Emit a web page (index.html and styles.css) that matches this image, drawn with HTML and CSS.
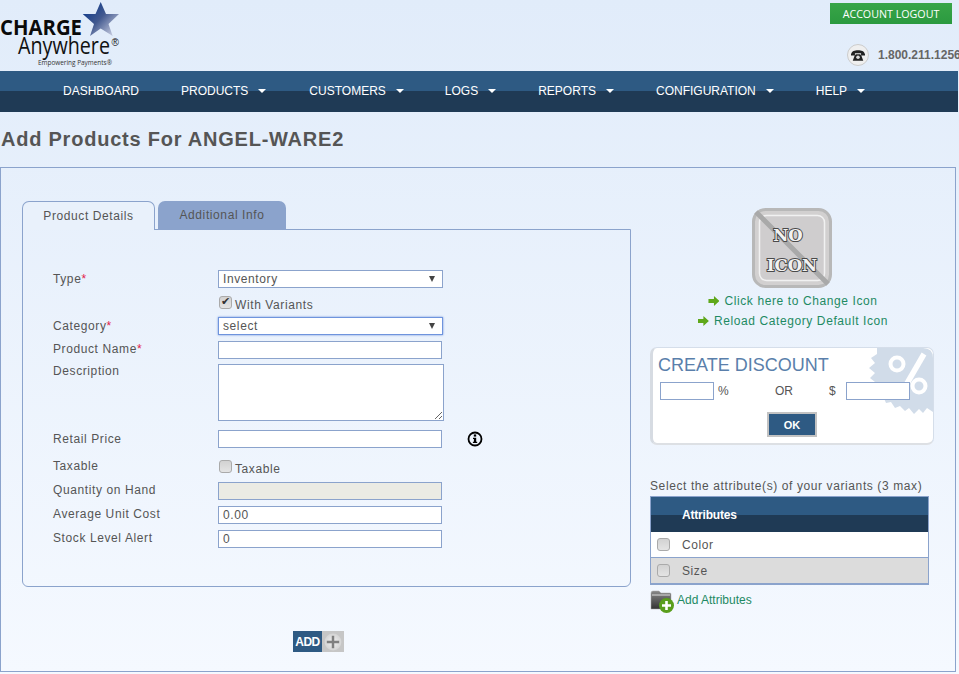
FILE: index.html
```html
<!DOCTYPE html>
<html lang="en">
<head>
<meta charset="utf-8">
<title>Add Products</title>
<link rel="stylesheet" href="styles.css">
</head>
<body>
<header class="top">
  <svg class="logo" width="125" height="71" viewBox="0 0 125 71" aria-label="Charge Anywhere">
    <defs>
      <linearGradient id="star" x1="0.2" y1="0" x2="1" y2="0.7">
        <stop offset="0" stop-color="#0f3a8a"/>
        <stop offset="0.5" stop-color="#42598f"/>
        <stop offset="1" stop-color="#b9c0d8"/>
      </linearGradient>
    </defs>
    <path d="M100.700 2 L106 14 L119 14 L108.500 24 L112.700 36 L100.700 28.500 L90 36 L94 24 L82.700 14 L95.500 14 Z" fill="url(#star)"/>
    <text x="0" y="35" class="logo-charge" textLength="82" lengthAdjust="spacingAndGlyphs">CHARGE</text>
    <text x="18" y="54" class="logo-any" textLength="92" lengthAdjust="spacingAndGlyphs">Anywhere</text>
    <text x="111.500" y="46" class="logo-reg">®</text>
    <text x="38" y="64.500" class="logo-tag" textLength="74" lengthAdjust="spacingAndGlyphs">Empowering Payments®</text>
  </svg>
  <div class="top-right">
    <a class="logout">ACCOUNT LOGOUT</a>
    <div class="phone">
      <span class="phone-icon">
        <svg width="14" height="11" viewBox="0 0 16 12"><path d="M0 4.500 C1 1 4 0 8 0 C12 0 15 1 16 4.500 L16 6 L11.500 6 L11.500 3.500 L4.500 3.500 L4.500 6 L0 6 Z M4 6.500 L5.500 4.500 L10.500 4.500 L12 6.500 L14 12 L2 12 Z" fill="#222"/><circle cx="8" cy="8" r="2" fill="#ddd"/></svg>
      </span>
      <span>1.800.211.1256</span>
    </div>
  </div>
</header>
<nav class="nav">
  <a class="nav-item">DASHBOARD</a>
  <a class="nav-item has-caret wide">PRODUCTS</a>
  <a class="nav-item has-caret narrow">CUSTOMERS</a>
  <a class="nav-item has-caret">LOGS</a>
  <a class="nav-item has-caret">REPORTS</a>
  <a class="nav-item has-caret">CONFIGURATION</a>
  <a class="nav-item has-caret">HELP</a>
</nav>
<h1 class="title">Add Products For ANGEL-WARE2</h1>
<main class="panel">
  <section class="left">
    <div class="tabs">
      <div class="tab active">Product Details</div>
      <div class="tab second">Additional Info</div>
    </div>
    <form class="tab-body">
      <label class="lbl r-type">Type<em>*</em></label>
      <div class="sel-wrap r-type"><select class="field"><option>Inventory</option></select></div>

      <span class="r-variants"></span>
      <label class="check r-variants"><input type="checkbox" checked><span>With Variants</span></label>

      <label class="lbl r-cat">Category<em>*</em></label>
      <div class="sel-wrap focus r-cat"><select class="field"><option>select</option></select></div>

      <label class="lbl r-name">Product Name<em>*</em></label>
      <input class="field short r-name" type="text">

      <label class="lbl r-desc">Description</label>
      <textarea class="field area r-desc"></textarea>

      <label class="lbl r-price">Retail Price</label>
      <div class="price-row r-price">
        <input class="field short" type="text">
        <svg class="info" width="16" height="16" viewBox="0 0 16 16"><circle cx="8" cy="8" r="6.500" fill="none" stroke="#000" stroke-width="1.800"/><rect x="6.800" y="3.400" width="2.400" height="2.200" fill="#000"/><path d="M6 6.800 H9.200 V10.800 H10.200 V12 H5.900 V10.800 H6.900 V8 H6 Z" fill="#000"/></svg>
      </div>

      <label class="lbl r-tax">Taxable</label>
      <label class="check r-tax"><input type="checkbox"><span>Taxable</span></label>

      <label class="lbl r-qty">Quantity on Hand</label>
      <input class="field short disabled r-qty" type="text" disabled>

      <label class="lbl r-avg">Average Unit Cost</label>
      <input class="field short r-avg" type="text" value="0.00">

      <label class="lbl r-stock">Stock Level Alert</label>
      <input class="field short r-stock" type="text" value="0">
    </form>
    <div class="add-wrap">
      <button class="add" type="button">ADD</button>
      <span class="add-plus">
        <svg width="18" height="18" viewBox="0 0 16 16"><defs><radialGradient id="knob"><stop offset="0" stop-color="#f2f2f2"/><stop offset="1" stop-color="#d4d4d4"/></radialGradient></defs><circle cx="8" cy="8" r="7.500" fill="url(#knob)"/><path d="M8 2.500 V13.500 M2.500 8 H13.500" stroke="#808080" stroke-width="2.200"/></svg>
      </span>
    </div>
  </section>
  <aside class="right">
    <svg class="noicon" width="80" height="80" viewBox="0 0 80 80">
      <rect x="1.500" y="1.500" width="77" height="77" rx="12" fill="#d2d0d0" stroke="#b8b8b8" stroke-width="3"/>
      <rect x="7.500" y="7.500" width="65" height="65" rx="7" fill="#cfcdce" stroke="#f1f1f1" stroke-width="1.500"/>
      <path d="M4 4 L76 76" stroke="#a9a9a9" stroke-width="5"/>
      <text x="36" y="33" class="noicon-text">NO</text>
      <text x="40" y="63" class="noicon-text">ICON</text>
    </svg>
    <a class="icon-link first"><i class="arrow"></i>Click here to Change Icon</a>
    <a class="icon-link"><i class="arrow"></i>Reload Category Default Icon</a>

    <div class="discount">
      <svg class="badge" width="64" height="66" viewBox="0 0 64 66">
        <path d="M8 0 H54 Q64 0 64 10 V64 L58 60 L54 65 L50 61 L45 66 L40 60 L36 63 L31 58 L26 60 L22 54 L17 55 L14 48 L9 49 L8 42 L3 40 L6 34 L1 30 L6 25 L0 20 L6 15 L2 10 L8 6 Z" fill="#d1dce9"/>
        <circle cx="28" cy="16" r="6.500" fill="none" stroke="#fff" stroke-width="4"/>
        <circle cx="50" cy="38" r="6.500" fill="none" stroke="#fff" stroke-width="4"/>
        <path d="M55 6 L33 44" stroke="#fff" stroke-width="5.500"/>
      </svg>
      <h2 class="discount-title">CREATE DISCOUNT</h2>
      <div class="discount-row">
        <input class="field d-input" type="text"><span class="d-pct">%</span>
        <span class="d-or">OR</span>
        <span class="d-usd">$</span><input class="field d-input d-input2" type="text">
      </div>
      <button class="ok" type="button">OK</button>
    </div>

    <p class="attr-hint">Select the attribute(s) of your variants (3 max)</p>
    <div class="attr">
      <div class="attr-head">Attributes</div>
      <label class="attr-row"><input type="checkbox"><span>Color</span></label>
      <label class="attr-row alt"><input type="checkbox"><span>Size</span></label>
    </div>
    <a class="add-attr">
      <svg width="25" height="24" viewBox="0 0 25 24">
        <defs><linearGradient id="fold" x1="0" y1="0" x2="0" y2="1"><stop offset="0" stop-color="#888"/><stop offset="1" stop-color="#333"/></linearGradient></defs>
        <path d="M1 3 Q1 1 3 1 H9 L11 3 H20 Q21 3 21 4 V19 H1 Z" fill="url(#fold)" stroke="#aaa" stroke-width="0.500"/>
        <path d="M2 5 H20" stroke="#ddd" stroke-width="1"/>
        <circle cx="16.500" cy="15.500" r="7.500" fill="#5a9e1c"/>
        <path d="M16.500 11 V20 M12 15.500 H21" stroke="#fff" stroke-width="2.600"/>
      </svg>
      <span>Add Attributes</span>
    </a>
  </aside>
</main>
</body>
</html>
```

FILE: styles.css
```css
* { box-sizing: border-box; }
html, body { margin: 0; padding: 0; }
body {
  width: 959px;
  height: 674px;
  overflow: hidden;
  font-family: "Liberation Sans", Arial, sans-serif;
  font-size: 12px;
  color: #555;
  background: linear-gradient(#e1ecfa, #f5f9ff);
}

/* header */
.top { height: 71px; display: flex; justify-content: space-between; }
.logo { display: block; }
.logo-charge { font: bold 21px "Open Sans", sans-serif; fill: #0a0a0a; }
.logo-any { font: 23px "Open Sans", sans-serif; fill: #111; }
.logo-reg { font: 10px "Liberation Sans", sans-serif; fill: #111; }
.logo-tag { font: 7px "Open Sans", sans-serif; fill: #333; }
.top-right { display: flex; flex-direction: column; align-items: flex-end; padding: 3px 7px 0 0; }
.logout {
  width: 122px; height: 21px;
  background: linear-gradient(#38a548, #2b9a3f);
  color: #fff; font: 10.700px/22px "Open Sans", sans-serif; text-align: center;
}
.phone {
  display: flex; align-items: center; gap: 9px;
  margin: 20px -7px 0 0; width: 112px;
  font-size: 12px; font-weight: bold; color: #666; white-space: nowrap;
}
.phone-icon {
  flex: none; width: 22px; height: 22px; border-radius: 50%;
  background: #efefef; border: 1px solid #ccc;
  display: flex; align-items: center; justify-content: center;
}

/* nav */
.nav {
  width: 958px; height: 41px; padding: 0 0 2px 63px;
  display: flex; align-items: center;
  background: linear-gradient(#2e5a83 0, #2e5a83 20px, #1f3a55 20px, #1f3a55 100%);
}
.nav-item { color: #fff; font-size: 12px; margin-right: 42px; white-space: nowrap; }
.nav-item.has-caret { display: flex; align-items: center; margin-right: 42px; }
.nav-item.wide { margin-right: 43px; }
.nav-item.narrow { margin-right: 41px; }
.nav-item.has-caret::after {
  content: ""; margin-left: 10px; margin-top: 1px;
  border-left: 4px solid transparent; border-right: 4px solid transparent; border-top: 4px solid #fff;
}

/* title */
.title { margin: 0; padding: 15px 0 0 1px; height: 55px; font-size: 20px; line-height: 25px; font-weight: bold; color: #555; letter-spacing: 0.770px; }

/* panel */
.panel {
  width: 956px; height: 505px;
  margin-left: 0;
  border: 1px solid #8ba3cc; border-left-width: 1px;
  display: flex;
  padding: 33px 0 0 21px;
}
.left { width: 628px; flex: none; }
.tabs { display: flex; gap: 3px; height: 29px; position: relative; z-index: 1; }
.tab {
  width: 128px; text-align: center; line-height: 29px; letter-spacing: 0.600px; height: 28px;
  background: #8ba3cc; border-radius: 7px 7px 0 0; color: #555;
}
.tab.active {
  width: 133px; height: 29px; background: #e9f1fb;
  border: 1px solid #8ba3cc; border-bottom: 0; line-height: 28px;
}
.tab-body {
  width: 609px; height: 358px; margin-top: -1px;
  border: 1px solid #8ba3cc; border-radius: 0 0 6px 6px;
  padding: 40px 0 0 30px;
  display: grid;
  grid-template-columns: 165px 1fr;
  grid-template-rows: 18px 23px 24px 23px 66px 29px 23px 24px 24px 18px;
  row-gap: 0;
  align-content: start;
}
.lbl { letter-spacing: 0.600px; line-height: 16px; color: #555; }
.lbl em { color: #e2204a; font-style: normal; }
.field {
  display: block; height: 18px;
  border: 1px solid #8ba3cc; background: #fff; border-radius: 0;
  padding: 0 4px; margin: 0;
  font: 12px "Liberation Sans", sans-serif; letter-spacing: 0.600px; color: #555;
  outline: 0;
}
.short { width: 224px; }
.disabled { background: #ebebe4; }
.area { width: 226px; height: 57px; resize: both; }
.sel-wrap { position: relative; width: 225px; height: 18px; }
.sel-wrap select { width: 100%; appearance: none; -webkit-appearance: none; }
.sel-wrap::after {
  content: ""; position: absolute; right: 8px; top: 6px;
  border-left: 3.500px solid transparent; border-right: 3.500px solid transparent; border-top: 6px solid #444;
}
.sel-wrap.focus select { border-color: #6f94dd; box-shadow: 0 0 2px #6f94dd; }
.check { display: flex; align-items: flex-start; gap: 3px; letter-spacing: 0.600px; color: #555; }
.check span { padding-top: 2px; }
input[type=checkbox] {
  appearance: none; -webkit-appearance: none;
  width: 13px; height: 13px; margin: 0 0 0 1px; flex: none; position: relative;
  border: 1px solid #aaa; border-radius: 3px;
  background: linear-gradient(#d2d2d2, #e4e4e4);
}
input[type=checkbox]:checked::after {
  content: "\2714"; position: absolute; left: 1px; top: -2px;
  font: 11px "DejaVu Sans", sans-serif; color: #333;
}
.r-type { grid-row: 1; }
.r-variants { grid-row: 2; padding-top: 8px; }
.r-cat { grid-row: 3; }
.sel-wrap.r-cat, .sel-wrap.r-type { align-self: start; }
.r-name { grid-row: 4; }
.r-desc { grid-row: 5; }
.r-price { grid-row: 6; }
.r-tax { grid-row: 7; }
.r-qty { grid-row: 8; }
.r-avg { grid-row: 9; }
.r-stock { grid-row: 10; }
label.lbl.r-type { padding-top: 1px; }
.sel-wrap.r-cat { margin-top: 6px; }
label.lbl.r-cat { padding-top: 7px; }
.field.r-name { margin-top: 6px; }
label.lbl.r-name { padding-top: 5px; margin-top: 1px; }
.field.r-desc { margin-top: 6px; }
label.lbl.r-desc { padding-top: 5px; }
label.lbl.r-price { padding-top: 7px; }
.price-row { display: flex; align-items: center; gap: 25px; height: 18px; margin-top: 6px; }
label.check.r-tax { padding-top: 7px; }
label.lbl.r-tax { padding-top: 5px; }
label.lbl.r-qty { padding-top: 6px; }
.field.r-qty { margin-top: 6px; }
label.lbl.r-avg { padding-top: 6px; }
.field.r-avg { margin-top: 6px; }
label.lbl.r-stock { padding-top: 6px; }
.field.r-stock { margin-top: 6px; }
.info { flex: none; }

.add-wrap { display: flex; margin: 44px 0 0 271px; }
.add {
  width: 29px; height: 21px; padding: 0; border: 0; background: #2e5a83; color: #fff;
  font: bold 12px "Liberation Sans", sans-serif; letter-spacing: -0.500px;
}
.add-plus { width: 22px; height: 21px; background: #c6c6c6; display: flex; align-items: center; justify-content: center; }

/* right */
.right { width: 284px; flex: none; display: flex; flex-direction: column; padding-top: 7px; }
.noicon { display: block; margin: 0 0 0 102px; flex: none; }
.noicon-text { font: bold 16.500px "DejaVu Serif", serif; fill: #f2f2f2; stroke: #4a4a4a; stroke-width: 2; paint-order: stroke; text-anchor: middle; }
.icon-link { display: flex; align-items: center; justify-content: center; color: #1e8a63; letter-spacing: 0.600px; height: 20px; width: 284px; gap: 5px; padding-left: 2px; }
.icon-link.first { margin-top: 3px; }
.arrow { width: 11px; height: 10px; flex: none; background: #5fa81a; clip-path: polygon(0 30%, 50% 30%, 50% 0, 100% 50%, 50% 100%, 50% 70%, 0 70%); }
.discount {
  position: relative; width: 284px; height: 98px; margin-top: 16px;
  background: #fff; border-radius: 7px;
  border: 1px solid #d5deea; border-left: 3px solid #d6dbe2; border-bottom: 2px solid #dde0e4;
  padding: 0 0 0 6px; overflow: hidden;
}
.badge { position: absolute; right: 0; top: 0; }
.discount-title { position: relative; margin: 7px 0 0 -1px; font-size: 18px; font-weight: normal; line-height: 21px; color: #5a7fab; }
.discount-row { position: relative; display: flex; align-items: center; height: 18px; margin-top: 6px; padding-left: 1px; }
.d-input { width: 54px; padding: 0; flex: none; }
.d-input2 { width: 64px; margin-left: 10px; }
.d-pct { margin-left: 4px; width: 57px; }
.d-or { width: 54px; }
.d-usd { width: 4px; margin-right: 3px; }
.ok {
  position: relative; display: block; margin: 12px 0 0 108px;
  width: 50px; height: 25px; padding: 0;
  background: #2e5a83; border: 2px solid #c2c2c2; color: #fff;
  font: bold 11px "Liberation Sans", sans-serif;
}
.attr-hint { margin: 34px 0 3px; letter-spacing: 0.600px; line-height: 14px; color: #555; }
.attr { width: 279px; border: 1px solid #8ba3cc; border-bottom-width: 2px; }
.attr-head {
  height: 35px; padding: 10px 0 0 31px; color: #fff; font-weight: bold; line-height: 16px; letter-spacing: -0.200px;
  background: linear-gradient(#2e5a83 0, #2e5a83 18px, #1f3a55 18px, #1f3a55 100%);
}
.attr-row {
  display: flex; align-items: center; gap: 12px; height: 26px; padding-left: 5px; background: #fff;
  letter-spacing: 0.600px; color: #555; border-bottom: 1px solid #8ba3cc;
}
.attr-row.alt { background: #dcdcdc; border-bottom: 0; height: 25px; }
.add-attr { display: flex; align-items: flex-start; gap: 2px; color: #1e8a63; margin-top: 5px; line-height: 20px; }
.add-attr svg { flex: none; }
```
